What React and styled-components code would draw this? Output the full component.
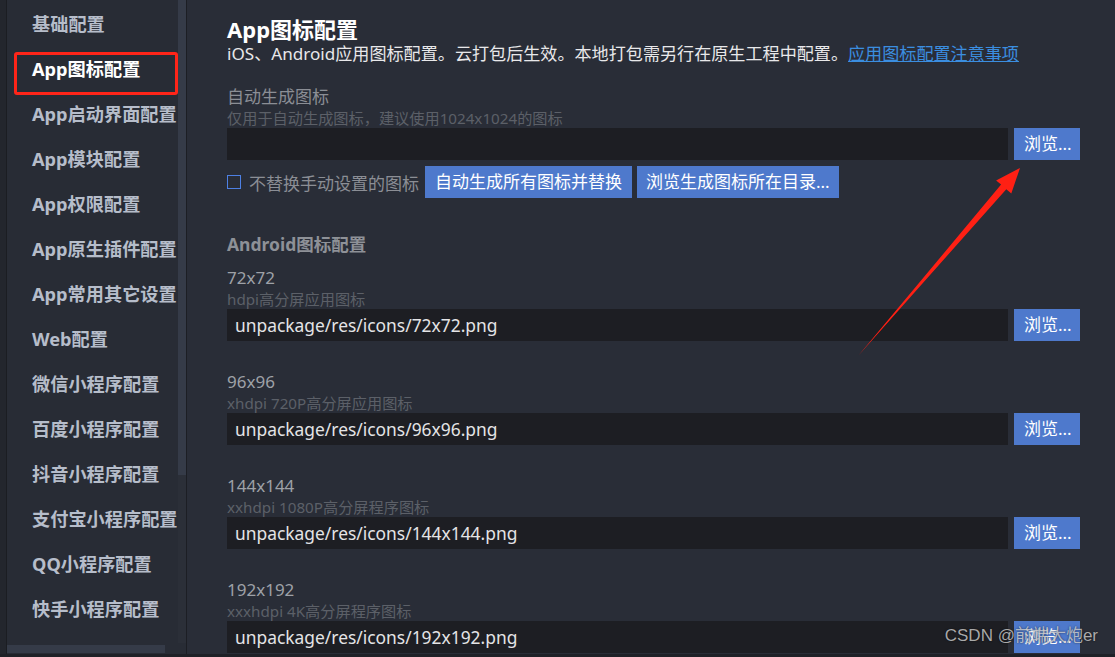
import React from "react";
import styled, { createGlobalStyle } from "styled-components";

const GlobalStyle = createGlobalStyle`
  html, body { margin: 0; padding: 0; background: #292d37; overflow: hidden; }
  * { box-sizing: border-box; }
  body { font-family: "Noto Sans", "Noto Sans CJK SC", sans-serif; }
`;

const Page = styled.div`
  position: relative;
  display: flex;
  width: 1115px;
  height: 657px;
  background: #292d37;
  border-bottom: 3px solid #1f2127;
  overflow: hidden;
`;

const LeftStrip = styled.div`
  width: 7px;
  flex: none;
  background: #23262d;
  border-right: 1px solid #1b1d22;
`;

const Sidebar = styled.aside`
  width: 180px;
  flex: none;
  display: flex;
  flex-direction: column;
  background: #282c35;
  border-right: 1px solid #1c1e24;
`;

const SidebarBody = styled.div`
  flex: 1;
  display: flex;
  min-height: 0;
  overflow: hidden;
`;

const NavList = styled.ul`
  list-style: none;
  margin: 0;
  padding: 2px 0 0 25px;
  flex: 1;
  overflow: hidden;
`;

const NavItem = styled.li`
  position: relative;
  height: 45px;
  line-height: 45px;
  font-size: 18.2px;
  font-weight: 700;
  white-space: nowrap;
  color: ${(p) => (p.$active ? "#ffffff" : "#b6bdca")};
  ${(p) =>
    p.$active &&
    `
    &::after {
      content: "";
      position: absolute;
      left: -18px;
      top: 5px;
      width: 158px;
      height: 37px;
      border: 3px solid #ff2519;
      border-radius: 3px;
    }
  `}
`;

const VScrollTrack = styled.div`
  width: 8px;
  flex: none;
  background: #2b2f38;
`;

const VScrollThumb = styled.div`
  height: 475px;
  background: #353b48;
`;

const HScrollRow = styled.div`
  height: 11px;
  flex: none;
  padding: 2px 20px 1px 0;
  display: flex;
`;

const HScrollThumb = styled.div`
  width: 158px;
  height: 8px;
  background: #353b48;
`;

const Main = styled.main`
  flex: 1;
  padding: 15px 35px 0 40px;
  overflow: hidden;
  min-width: 0;
`;

const Title = styled.h1`
  margin: 0;
  font-size: 22px;
  font-weight: 700;
  line-height: 28px;
  color: #ffffff;
`;

const Desc = styled.p`
  margin: 0;
  font-size: 17.1px;
  line-height: 22px;
  color: #e8e8ea;
  white-space: nowrap;
`;

const Link = styled.a`
  color: #3b8ee0;
  text-decoration: underline;
`;

const Section = styled.section`
  margin-top: ${(p) => p.$mt || 0}px;
`;

const FieldLabel = styled.div`
  font-size: 17px;
  line-height: 22px;
  color: ${(p) => p.$color || "#8b8e95"};
`;

const Hint = styled.div`
  font-size: 15.2px;
  line-height: 20px;
  color: #5c6068;
  white-space: nowrap;
`;

const InputRow = styled.div`
  display: flex;
  gap: 6px;
  height: 32px;
`;

const PathInput = styled.div`
  flex: 1;
  background: #1d1e23;
  color: #e4e4e6;
  font-size: 17.4px;
  line-height: 32px;
  padding: 0 8px;
  white-space: nowrap;
  overflow: hidden;
`;

const Button = styled.button`
  border: none;
  margin: 0;
  height: 32px;
  padding: 0 ${(p) => p.$px || 10}px;
  background: #4e79cc;
  color: #ffffff;
  font-family: inherit;
  font-size: 17px;
  line-height: 32px;
  white-space: nowrap;
  width: ${(p) => (p.$w ? `${p.$w}px` : "auto")};
  flex: none;
`;

const CheckRow = styled.div`
  display: flex;
  align-items: center;
  gap: 5px;
  margin-top: 6px;
  height: 32px;
`;

const CheckLabel = styled.label`
  display: flex;
  align-items: center;
  gap: 8px;
  font-size: 17px;
  color: #8b8e95;
  margin-right: 1px;
  white-space: nowrap;
`;

const CheckBox = styled.span`
  width: 14px;
  height: 14px;
  border: 1.5px solid #4d80e4;
  display: inline-block;
`;

const SubHeading = styled.h2`
  margin: 34px 0 11px;
  font-size: 17.5px;
  font-weight: 700;
  line-height: 24px;
  color: #8e9197;
`;

const Group = styled.div`
  margin-bottom: 30px;
`;

const Overlay = styled.svg`
  position: absolute;
  left: 0;
  top: 0;
  width: 1115px;
  height: 657px;
  pointer-events: none;
`;

const Watermark = styled.div`
  position: absolute;
  right: 17px;
  bottom: 8px;
  font-family: "Liberation Sans", "Noto Sans CJK SC", sans-serif;
  font-size: 17px;
  color: rgba(220, 220, 220, 0.75);
  text-shadow: 0 0 2px rgba(0, 0, 0, 0.6);
  pointer-events: none;
`;

const navItems = [
  "基础配置",
  "App图标配置",
  "App启动界面配置",
  "App模块配置",
  "App权限配置",
  "App原生插件配置",
  "App常用其它设置",
  "Web配置",
  "微信小程序配置",
  "百度小程序配置",
  "抖音小程序配置",
  "支付宝小程序配置",
  "QQ小程序配置",
  "快手小程序配置",
  "飞书小程序配置",
];

const groups = [
  { size: "72x72", hint: "hdpi高分屏应用图标", path: "unpackage/res/icons/72x72.png" },
  { size: "96x96", hint: "xhdpi 720P高分屏应用图标", path: "unpackage/res/icons/96x96.png" },
  { size: "144x144", hint: "xxhdpi 1080P高分屏程序图标", path: "unpackage/res/icons/144x144.png" },
  { size: "192x192", hint: "xxxhdpi 4K高分屏程序图标", path: "unpackage/res/icons/192x192.png" },
];

export default function App() {
  return (
    <>
      <GlobalStyle />
      <Page>
        <LeftStrip />
        <Sidebar>
          <SidebarBody>
            <NavList>
              {navItems.map((t, i) => (
                <NavItem key={t} $active={i === 1}>
                  {t}
                </NavItem>
              ))}
            </NavList>
            <VScrollTrack>
              <VScrollThumb />
            </VScrollTrack>
          </SidebarBody>
          <HScrollRow>
            <HScrollThumb />
          </HScrollRow>
        </Sidebar>
        <Main>
          <Title>App图标配置</Title>
          <Desc>
            iOS、Android应用图标配置。云打包后生效。本地打包需另行在原生工程中配置。
            <Link>应用图标配置注意事项</Link>
          </Desc>
          <Section $mt={21}>
            <FieldLabel>自动生成图标</FieldLabel>
            <Hint>仅用于自动生成图标，建议使用1024x1024的图标</Hint>
            <InputRow>
              <PathInput />
              <Button $w={66}>浏览...</Button>
            </InputRow>
            <CheckRow>
              <CheckLabel>
                <CheckBox />
                不替换手动设置的图标
              </CheckLabel>
              <Button $px={10}>自动生成所有图标并替换</Button>
              <Button $px={9}>浏览生成图标所在目录...</Button>
            </CheckRow>
          </Section>
          <SubHeading>Android图标配置</SubHeading>
          {groups.map((g) => (
            <Group key={g.size}>
              <FieldLabel $color="#9ea1a7">{g.size}</FieldLabel>
              <Hint>{g.hint}</Hint>
              <InputRow>
                <PathInput>{g.path}</PathInput>
                <Button $w={66}>浏览...</Button>
              </InputRow>
            </Group>
          ))}
        </Main>
        <Overlay viewBox="0 0 1115 657">
          <polygon
            points="858,356 1006.3,189.2 1011.3,193.4 1020,168 996.1,180.4 1001.1,184.6"
            fill="#ff2014"
          />
        </Overlay>
        <Watermark>CSDN @前端大炮er</Watermark>
      </Page>
    </>
  );
}
